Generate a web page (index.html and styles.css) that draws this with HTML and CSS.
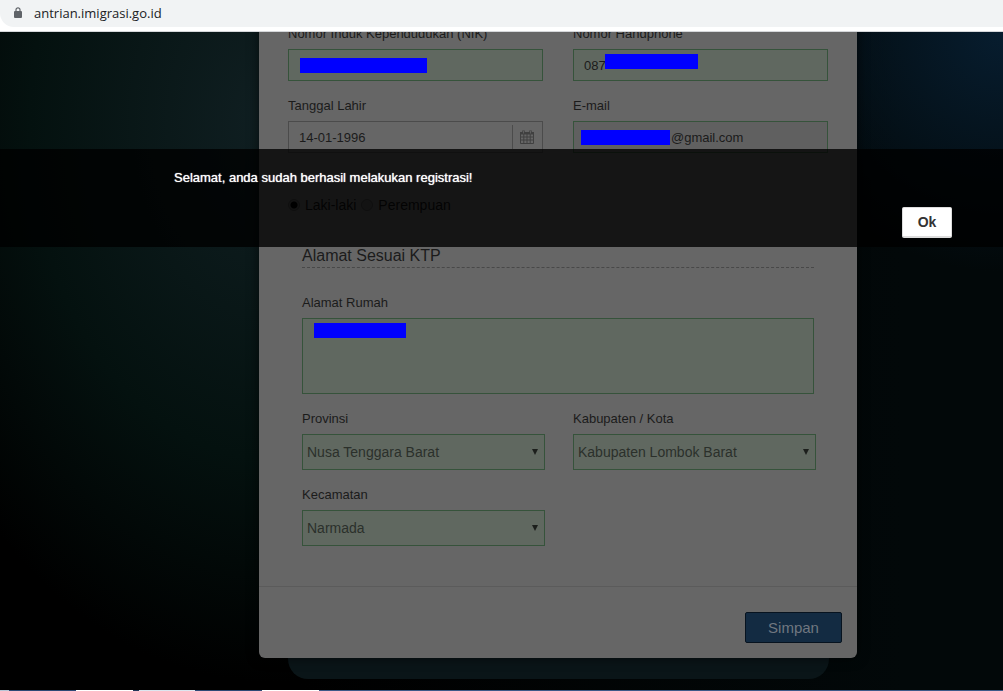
FILE: index.html
```html
<!DOCTYPE html>
<html lang="id">
<head>
<meta charset="utf-8">
<title>Antrian Imigrasi</title>
<link rel="stylesheet" href="styles.css">
</head>
<body>
<header class="browser">
  <div class="address">
    <svg class="lock" viewBox="0 0 8 11" aria-hidden="true"><path d="M2 5V2.8a2 2 0 0 1 4 0V5" fill="none" stroke="#5f6368" stroke-width="1.2"/><rect x="0" y="4" width="8" height="7" rx="1" fill="#5f6368"/></svg>
    <span>antrian.imigrasi.go.id</span>
  </div>
</header>
<main class="viewport">
  <div class="stage">
    <div class="column">
      <form class="card">
        <div class="personal">
          <div class="field">
            <label for="nik">Nomor Induk Kependudukan (NIK)</label>
            <div class="control"><input class="box valid" id="nik" type="text"><span class="mask mask-nik"></span></div>
          </div>
          <div class="field">
            <label for="phone">Nomor Handphone</label>
            <div class="control"><input class="box valid" id="phone" type="text" value="087"><span class="mask mask-phone"></span></div>
          </div>
          <div class="field">
            <label for="birth">Tanggal Lahir</label>
            <div class="control"><input class="box" id="birth" type="text" value="14-01-1996">
              <span class="calendar"><svg viewBox="0 0 14 14" aria-hidden="true"><path d="M.5 3.5h13v10H.5zM.5 7h13M.5 10h13M3.8 4v9.5M7 4v9.5M10.2 4v9.5" fill="none" stroke="#404040"/><path d="M0 2h14v2.500H0z" fill="#404040"/><path d="M3.500.5v3M10.500.5v3" stroke="#404040" stroke-width="2.500"/><path d="M3.500 1v2.500M10.500 1v2.500" stroke="#666" stroke-width=".8"/></svg></span>
            </div>
          </div>
          <div class="field">
            <label for="email">E-mail</label>
            <div class="control"><input class="box email" id="email" type="text" value="@gmail.com"><span class="mask mask-email"></span></div>
          </div>
        </div>
        <div class="gender" role="radiogroup" aria-label="Gender">
          <input type="radio" name="gender" id="male" checked><label for="male">Laki-laki</label>
          <input type="radio" name="gender" id="female"><label for="female">Perempuan</label>
        </div>
        <section class="home">
          <h2>Alamat Sesuai KTP</h2>
          <div class="field">
            <label for="street">Alamat Rumah</label>
            <div class="control"><textarea class="box valid" id="street"></textarea><span class="mask mask-street"></span></div>
          </div>
          <div class="regions">
            <div class="field">
              <label for="province">Provinsi</label>
              <div class="control"><select class="box valid" id="province"><option>Nusa Tenggara Barat</option></select><svg class="arrow" viewBox="0 0 6 6" aria-hidden="true"><path d="M0 0h6L3 6z"/></svg></div>
            </div>
            <div class="field">
              <label for="city">Kabupaten / Kota</label>
              <div class="control"><select class="box valid" id="city"><option>Kabupaten Lombok Barat</option></select><svg class="arrow" viewBox="0 0 6 6" aria-hidden="true"><path d="M0 0h6L3 6z"/></svg></div>
            </div>
            <div class="field">
              <label for="district">Kecamatan</label>
              <div class="control"><select class="box valid" id="district"><option>Narmada</option></select><svg class="arrow" viewBox="0 0 6 6" aria-hidden="true"><path d="M0 0h6L3 6z"/></svg></div>
            </div>
          </div>
        </section>
        <footer class="actions"><button class="save" type="button">Simpan</button></footer>
      </form>
      <div class="panel"></div>
    </div>
  </div>
  <div class="notice" role="alertdialog" aria-labelledby="message">
    <p id="message">Selamat, anda sudah berhasil melakukan registrasi!</p>
    <button class="ok" type="button">Ok</button>
  </div>
</main>
<div class="taskbar"></div>
</body>
</html>
```
FILE: styles.css
```css
* { box-sizing: border-box; }
body {
  margin: 0;
  min-height: 100vh;
  display: flex;
  flex-direction: column;
  font: 13px/18px "Liberation Sans", Arial, sans-serif;
  color: #1b1b1b;
  background: #000;
}
.browser {
  padding-bottom: 4px;
  background: #fff;
  border-bottom: 1px solid #d5d7da;
}
.address {
  display: flex;
  align-items: center;
  gap: 12px;
  height: 27px;
  padding: 0 0 2px 14px;
  border-radius: 0 0 0 14px;
  background: #f1f3f4;
  color: #202124;
  font: 13px/18px "Open Sans", "Noto Sans", sans-serif;
}
.lock { width: 8px; height: 11px; }
.viewport {
  position: relative;
  flex: 1;
  overflow: hidden;
  background:
    radial-gradient(ellipse 240px 240px at 100% 0, #071d2f, transparent),
    radial-gradient(ellipse 400px 560px at 270px 90px, #101f22 0%, #04110f 60%, transparent 100%),
    linear-gradient(90deg, #000 30%, #020809 90%);
}
.stage {
  display: grid;
  grid-template-columns: 259fr minmax(540px, 598px) 146fr;
}
.column { grid-column: 2; }
.card {
  position: relative;
  border-radius: 0 0 6px 6px;
  background: #666;
  box-shadow: 0 0 12px rgba(0, 0, 0, .6);
}
.personal {
  display: grid;
  grid-template-columns: 1fr 1fr;
  gap: 16px 30px;
  margin-top: -7px;
  padding: 0 29px;
}
.field > label { display: block; margin-bottom: 6px; }
.control { position: relative; }
.box {
  display: block;
  width: 100%;
  height: 32px;
  padding: 0 10px;
  border: 1px solid #4b4b4b;
  border-radius: 0;
  background: #666;
  color: #1b1b1b;
  font: inherit;
  outline: 0;
}
.valid, .email { border-color: #36533b; }
.valid { background: #606860; }
.email { padding-left: 97px; background: #606060; }
textarea.box { height: 76px; resize: none; }
select.box {
  height: 36px;
  padding: 0 4px;
  appearance: none;
  color: #2b302b;
  font-size: 14px;
}
.arrow {
  position: absolute;
  right: 7px;
  top: 15px;
  width: 6px;
  height: 6px;
  fill: #1c1f1c;
}
.calendar {
  position: absolute;
  right: 0;
  top: 4px;
  width: 31px;
  height: 24px;
  padding: 5px 7px;
  border-left: 1px solid #4b4b4b;
}
.calendar svg { display: block; width: 14px; height: 14px; }
.mask {
  position: absolute;
  height: 15px;
  background: #00f;
}
.mask-nik { left: 12px; top: 9px; width: 127px; }
.mask-phone { left: 32px; top: 5px; width: 93px; }
.mask-email { left: 8px; top: 9px; width: 89px; }
.mask-street { left: 12px; top: 5px; width: 92px; }
.gender {
  display: flex;
  align-items: center;
  gap: 5px;
  padding: 43px 29px 0;
  font-size: 14px;
  color: #101010;
}
.gender input {
  appearance: none;
  width: 12px;
  height: 12px;
  margin: 0;
  border: 1px solid #444;
  border-radius: 50%;
  background: #5c5c5c;
}
.gender input:checked { background: radial-gradient(#000 3px, #5c5c5c 4px); }
.home { padding: 32px 43px 40px; }
.home h2 {
  margin: 0 0 26px;
  padding-bottom: 1px;
  border-bottom: 1px dashed #484848;
  font-size: 16px;
  font-weight: 400;
  line-height: 20px;
}
.regions {
  display: grid;
  grid-template-columns: 243px 243px;
  gap: 16px 28px;
  margin-top: 16px;
}
.actions {
  display: flex;
  justify-content: flex-end;
  padding: 25px 15px 15px;
  border-top: 1px solid #5b5b5b;
}
.save {
  width: 97px;
  height: 31px;
  padding: 0;
  border: 1px solid #07131f;
  border-radius: 2px;
  background: #132b42;
  color: #707780;
  font: 15px/20px "Liberation Sans", Arial, sans-serif;
}
.panel {
  height: 21px;
  margin: 0 28px 0 29px;
  border-radius: 0 0 20px 20px;
  background: #0a1518;
}
.notice {
  position: absolute;
  top: 117px;
  left: 0;
  right: 0;
  display: flex;
  flex-direction: column;
  gap: 20px;
  padding: 20px 51px 9px 174px;
  background: rgba(0, 0, 0, .79);
  color: #fff;
  text-shadow: 0 0 1px #fff;
}
.notice p { margin: 0; }
.ok {
  align-self: flex-end;
  width: 50px;
  height: 31px;
  padding: 0;
  border: 1px solid #ddd;
  border-bottom: 2px solid #ddd;
  border-radius: 2px;
  background: #fff;
  color: #333;
  font: bold 14px/18px "Liberation Sans", Arial, sans-serif;
}
.taskbar {
  height: 1px;
  background: linear-gradient(90deg, #b8c6d6 9px, #2d4976 9px 76px, #fff 76px 133px, #22365a 133px 139px, #dce6ef 139px 195px, #2d4976 195px 262px, #fff 262px 319px, #3c5a88 319px);
}
```
